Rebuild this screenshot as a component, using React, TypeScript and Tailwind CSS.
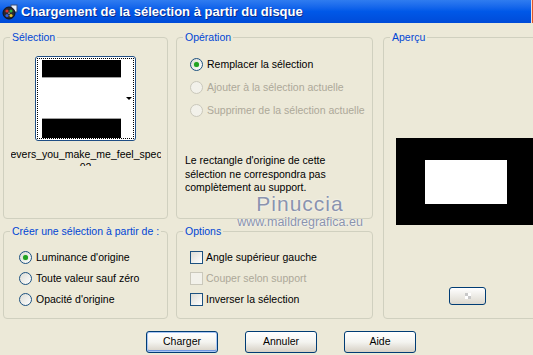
import { FC, ReactNode } from "react";

const Radio: FC<{ checked?: boolean; disabled?: boolean }> = ({ checked, disabled }) => (
  <span
    className={`flex h-[13px] w-[13px] shrink-0 items-center justify-center rounded-full border ${
      disabled ? "border-[#CAC8BB] bg-[#F2F1EA]" : "border-[#1C5180] bg-linear-to-br from-[#DCDCD5] to-white"
    }`}
  >
    {checked && <span className="h-[5px] w-[5px] rounded-full bg-[#21A121] shadow-[0_0_1px_#5BD35B]" />}
  </span>
);

const Check: FC<{ disabled?: boolean }> = ({ disabled }) => (
  <span
    className={`h-[13px] w-[13px] shrink-0 border ${
      disabled ? "border-[#CAC8BB] bg-[#F2F1EA]" : "border-[#1C5180] bg-linear-to-br from-[#DCDCD5] to-white"
    }`}
  />
);

const Group: FC<{ title: string; className?: string; children?: ReactNode }> = ({ title, className, children }) => (
  <fieldset className={`min-w-0 rounded-[4px] border border-[#D0D0BF] ${className ?? ""}`}>
    <legend className="ml-[6px] whitespace-nowrap px-[2px] text-[10.5px] leading-[13px] text-[#0046D5]">{title}</legend>
    {children}
  </fieldset>
);

const Row: FC<{ control: ReactNode; label: string; disabled?: boolean; gap?: string }> = ({ control, label, disabled, gap }) => (
  <div className={`flex h-[13px] items-center ${gap ?? "gap-[4px]"}`}>
    {control}
    <span className={`whitespace-nowrap text-[10.5px] leading-[13px] ${disabled ? "text-[#ACA899]" : "text-black"}`}>{label}</span>
  </div>
);

const XpButton: FC<{ label: string; isDefault?: boolean }> = ({ label, isDefault }) => (
  <button
    className={`h-[22px] w-[72px] rounded-[3px] border border-[#003C74] bg-linear-to-b from-white via-[#F4F4F0] to-[#D6D0C5] text-[10.5px] text-black ${
      isDefault ? "shadow-[inset_0_0_0_1px_#A9C6F4,inset_0_-1px_0_1px_#6F97E0]" : ""
    }`}
  >
    {label}
  </button>
);

const TitleIcon = () => (
  <svg width="16" height="16" viewBox="0 0 16 16">
    <rect x="9" y="1" width="6" height="7" fill="#E8EEF8" stroke="#3A4E78" strokeWidth="1" />
    <circle cx="7" cy="9" r="6" fill="#2A2A30" stroke="#101018" />
    <circle cx="5" cy="7" r="1.6" fill="#D83030" />
    <circle cx="9" cy="7" r="1.6" fill="#30B040" />
    <circle cx="5" cy="11.5" r="1.6" fill="#3060E0" />
    <circle cx="9" cy="11.5" r="1.6" fill="#E0C030" />
    <circle cx="7" cy="9.2" r="0.9" fill="#9090A0" />
  </svg>
);

export default function App() {
  return (
    <div className="relative h-[355px] w-[533px] overflow-hidden bg-[#ECE9D8] font-['Liberation_Sans',Arial,sans-serif]">
      {/* title bar */}
      <div className="flex h-[23px] items-center bg-linear-to-b from-[#2F7CF0] via-[#0058E8] to-[#004BD8] pl-[2px]">
        <TitleIcon />
        <span className="ml-[3px] text-[13px] font-bold text-white [text-shadow:1px_1px_0_#0B2A8A]">
          Chargement de la sélection à partir du disque
        </span>
        <div className="ml-auto h-full w-[2px] border-l border-white/80 bg-[#E0562C]" />
      </div>

      <div className="flex pl-[3px] pt-[8px]">
        <div className="grid shrink-0 grid-cols-[165px_197px] grid-rows-[188px_94px] gap-x-[8px] gap-y-[6px]">
          <Group title="Sélection">
            <div className="mx-auto mt-[12px] h-[85px] w-[101px] rounded-[3px] border border-[#1F4E84] bg-white p-px">
              <div className="flex h-full border border-dotted border-black">
                <div className="ml-[4px] mt-[1px] flex w-[79px] flex-col justify-between">
                  <div className="h-[18px] border-b border-[#A0A0A0] bg-black" />
                  <div className="h-[20px] border-t border-[#A0A0A0] bg-black" />
                </div>
                <div className="flex flex-1 items-center justify-end pr-[1px]">
                  <span className="h-0 w-0 border-x-[3px] border-t-[3px] border-x-transparent border-t-black" />
                </div>
              </div>
            </div>
            <div className="mx-auto mt-[7px] h-[18px] w-[150px] overflow-hidden text-center text-[10.5px] leading-[13px] text-black">
              <div className="whitespace-nowrap">evers_you_make_me_feel_spec</div>
              <div>02</div>
            </div>
          </Group>

          <Group title="Opération">
            <div className="mt-[14px] flex flex-col gap-[10px] pl-[13px]">
              <Row control={<Radio checked />} label="Remplacer la sélection" />
              <Row control={<Radio disabled />} label="Ajouter à la sélection actuelle" disabled />
              <Row control={<Radio disabled />} label="Supprimer de la sélection actuelle" disabled />
            </div>
            <p className="mt-[37px] pl-[8px] text-[10.5px] leading-[13.5px] text-black">
              Le rectangle d'origine de cette
              <br />
              sélection ne correspondra pas
              <br />
              complètement au support.
            </p>
          </Group>

          <Group title="Créer une sélection à partir de :">
            <div className="mt-[13px] flex flex-col gap-[8px] pl-[15px]">
              <Row control={<Radio checked />} label="Luminance d'origine" />
              <Row control={<Radio />} label="Toute valeur sauf zéro" />
              <Row control={<Radio />} label="Opacité d'origine" />
            </div>
          </Group>

          <Group title="Options">
            <div className="mt-[13px] flex flex-col gap-[8px] pl-[13px]">
              <Row control={<Check />} label="Angle supérieur gauche" gap="gap-[3px]" />
              <Row control={<Check disabled />} label="Couper selon support" disabled gap="gap-[3px]" />
              <Row control={<Check />} label="Inverser la sélection" gap="gap-[3px]" />
            </div>
          </Group>
        </div>

        <Group title="Aperçu" className="ml-[10px] h-[288px] w-[169px] shrink-0">
          <div className="ml-[12px] mt-[94px] h-[87px] w-[143px] bg-black pl-[29px] pt-[22px]">
            <div className="h-[44px] w-[82px] bg-white" />
          </div>
          <div className="mx-auto mt-[62px] flex h-[18px] w-[37px] items-center justify-center rounded-[3px] border border-[#003C74] bg-linear-to-b from-white to-[#DCD8CE]">
            <div className="grid grid-cols-2">
              <span className="h-[3px] w-[3px] bg-[#C8C8C8]" />
              <span className="h-[3px] w-[3px] bg-white" />
              <span className="h-[3px] w-[3px] bg-white" />
              <span className="h-[3px] w-[3px] bg-[#C8C8C8]" />
            </div>
          </div>
        </Group>
      </div>

      <div className="mt-[12px] flex gap-[27px] pl-[146px]">
        <XpButton label="Charger" isDefault />
        <XpButton label="Annuler" />
        <XpButton label="Aide" />
      </div>

      {/* watermark */}
      <div className="pointer-events-none absolute left-[238px] top-[193px] flex w-[124px] flex-col items-center text-[#8A93AE] [text-shadow:0_0_2px_#ffffff]">
        <span className="text-[21px] leading-[22px] tracking-[1px]">Pinuccia</span>
        <span className="text-[12.5px] leading-[14px]">www.maildregrafica.eu</span>
      </div>
    </div>
  );
}
